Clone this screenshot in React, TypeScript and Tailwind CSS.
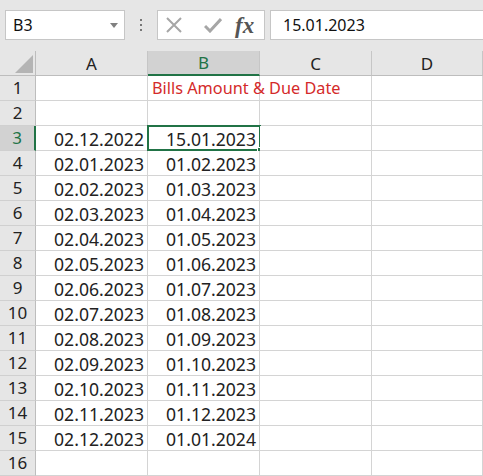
import React from "react";

const rows: [string, string][] = [
  ["02.12.2022", "15.01.2023"],
  ["02.01.2023", "01.02.2023"],
  ["02.02.2023", "01.03.2023"],
  ["02.03.2023", "01.04.2023"],
  ["02.04.2023", "01.05.2023"],
  ["02.05.2023", "01.06.2023"],
  ["02.06.2023", "01.07.2023"],
  ["02.07.2023", "01.08.2023"],
  ["02.08.2023", "01.09.2023"],
  ["02.09.2023", "01.10.2023"],
  ["02.10.2023", "01.11.2023"],
  ["02.11.2023", "01.12.2023"],
  ["02.12.2023", "01.01.2024"],
];

const cols = ["A", "B", "C", "D"];

function RowHead({ n, active }: { n: number; active?: boolean }) {
  return (
    <div
      className={
        "flex h-[25px] w-[36px] shrink-0 items-center justify-center border-b border-r border-b-[#d0d0d0] " +
        (active ? "border-r-2 border-r-[#217346] bg-[#d2d2d2] text-[#217346]" : "border-r-[#bdbdbd] bg-[#e6e6e6] text-[#222]")
      }
    >
      {n}
    </div>
  );
}

function Cell({ children, last, className = "" }: { children?: React.ReactNode; last?: boolean; className?: string }) {
  return (
    <div
      className={
        "relative flex h-[25px] shrink-0 items-center border-b border-r border-[#d4d4d4] bg-white " +
        (last ? "w-[111px] " : "w-[112px] ") +
        className
      }
    >
      {children}
    </div>
  );
}

export default function App() {
  return (
    <div className="h-[476px] w-[483px] overflow-hidden bg-[#e6e6e6] text-[17px] text-[#222] [font-family:'Noto_Sans',sans-serif]">
      {/* formula bar */}
      <div className="flex h-[51px] items-start pt-[10px] pl-[5px]">
        <div className="flex h-[30px] w-[120px] items-center justify-between border border-[#c6c6c6] bg-white pl-[7px] pr-[6px]">
          <span className="text-[16px] text-[#111]">B3</span>
          <svg width="8" height="5" viewBox="0 0 8 5">
            <path d="M0 0h8L4 5z" fill="#808080" />
          </svg>
        </div>
        <div className="flex h-[30px] w-[32px] flex-col items-center justify-center gap-[3px]">
          <span className="h-[2px] w-[2px] bg-[#777]" />
          <span className="h-[2px] w-[2px] bg-[#777]" />
          <span className="h-[2px] w-[2px] bg-[#777]" />
        </div>
        <div className="flex h-[30px] w-[108px] items-center border border-[#c6c6c6] bg-white pl-[8px]">
          <svg width="16" height="16" viewBox="0 0 16 16">
            <path d="M1 1l14 14M15 1L1 15" stroke="#a6a6a6" strokeWidth="2" fill="none" />
          </svg>
          <svg width="18" height="16" viewBox="0 0 18 16" className="ml-[22px]">
            <path d="M1 9l5 5L17 2" stroke="#a6a6a6" strokeWidth="3" fill="none" />
          </svg>
          <span className="ml-[13px] text-[23px] font-bold italic leading-none text-[#555] [font-family:'Liberation_Serif',serif]">
            fx
          </span>
        </div>
        <div className="ml-[5px] flex h-[30px] flex-1 items-center border-y border-l border-[#c6c6c6] bg-white pl-[12px]">
          <span className="text-[16px] text-[#111]">15.01.2023</span>
        </div>
      </div>

      {/* column headers */}
      <div className="flex h-[25px]">
        <div className="relative h-[25px] w-[36px] shrink-0 border-b border-r border-[#bdbdbd]">
          <svg width="18" height="18" viewBox="0 0 18 18" className="absolute left-[15px] top-[4px]">
            <path d="M18 0V18H0z" fill="#b4b4b4" />
          </svg>
        </div>
        {cols.map((c, i) => (
          <div
            key={c}
            className={
              "flex h-[25px] shrink-0 items-center justify-center border-r border-[#c6c6c6] pt-[1px] " +
              (i === 3 ? "w-[111px] " : "w-[112px] ") +
              (c === "B"
                ? "border-b-2 border-b-[#217346] bg-[#d2d2d2] text-[#217346]"
                : "border-b border-b-[#bdbdbd] bg-[#e6e6e6]")
            }
          >
            {c}
          </div>
        ))}
      </div>

      {/* row 1 */}
      <div className="flex">
        <RowHead n={1} />
        <Cell />
        <Cell className="overflow-visible">
          <span className="absolute left-[4px] z-10 whitespace-nowrap text-[16.3px] text-[#d42a2a]">Bills Amount &amp; Due Date</span>
        </Cell>
        <Cell />
        <Cell last />
      </div>
      {/* row 2 */}
      <div className="flex">
        <RowHead n={2} />
        <Cell />
        <Cell />
        <Cell />
        <Cell last />
      </div>

      {rows.map(([a, b], i) => (
        <div className="flex" key={i}>
          <RowHead n={i + 3} active={i === 0} />
          <Cell className="justify-end pr-[3px] pt-[2px] text-[17.6px]">{a}</Cell>
          <Cell className="justify-end pr-[3px] pt-[2px] text-[17.6px]">
            {i === 0 && (
              <span className="pointer-events-none absolute -left-[1px] -top-[1px] h-[26px] w-[114px] border-2 border-[#217346]">
                <span className="absolute -bottom-[4px] -right-[4px] h-[6px] w-[6px] border border-white bg-[#217346]" />
              </span>
            )}
            {b}
          </Cell>
          <Cell />
          <Cell last />
        </div>
      ))}

      <div className="flex">
        <RowHead n={16} />
        <Cell />
        <Cell />
        <Cell />
        <Cell last />
      </div>
    </div>
  );
}
